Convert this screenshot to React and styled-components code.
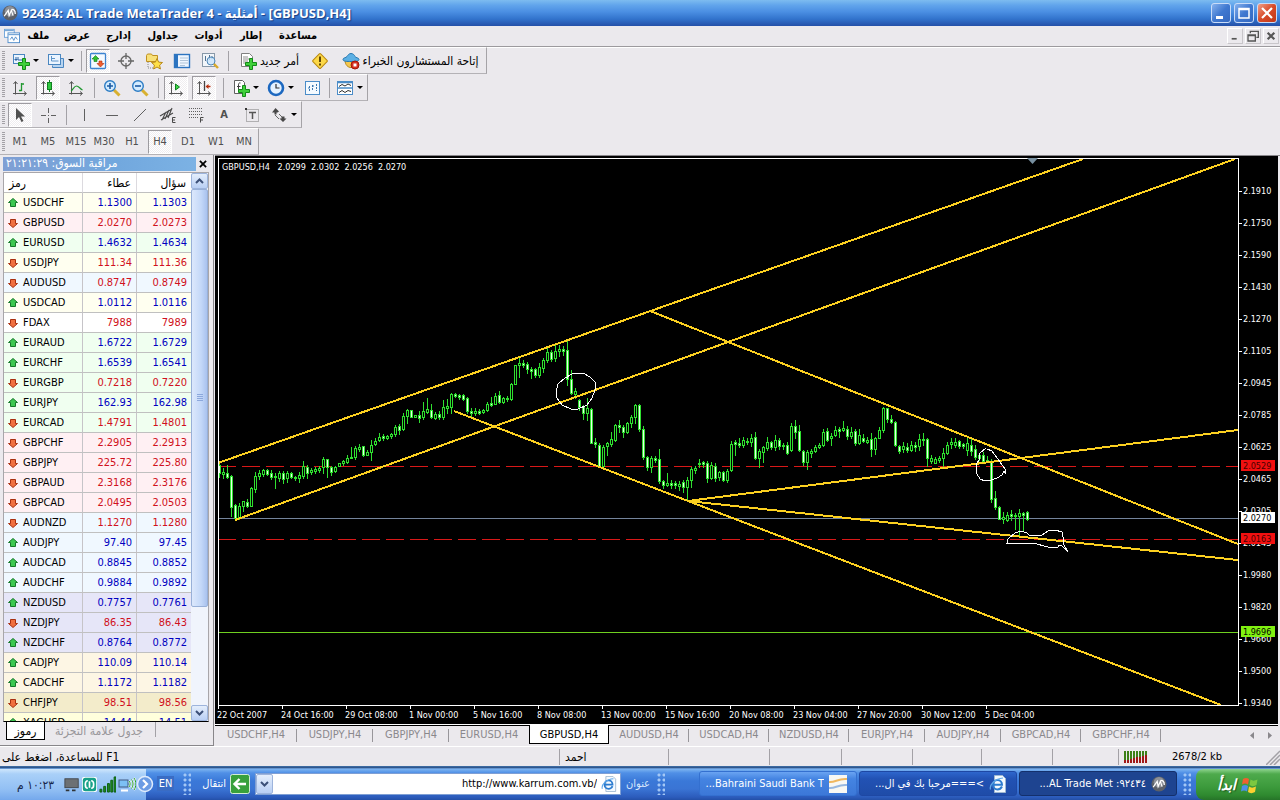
import React from "react";
import styled, { createGlobalStyle, css } from "styled-components";

const GlobalStyle = createGlobalStyle`
  * { box-sizing: border-box; }
  body { margin: 0; background: #ebe9ed; }
  body, button, input, table {
    font-family: "DejaVu Sans Condensed", "DejaVu Sans", sans-serif;
    font-size: 11px;
    color: #000;
  }
  button { border: 0; padding: 0; margin: 0; background: none; }
  svg { display: block; flex: none; }
`;

const Desktop = styled.div`
  height: 100vh;
  min-height: 480px;
  display: flex;
  flex-direction: column;
  overflow: hidden;
`;

/* ---------- title and menu ---------- */

const TitleBar = styled.header`
  height: 26px;
  flex: none;
  display: flex;
  align-items: center;
  gap: 4px;
  padding: 0 3px 0 2px;
  background: linear-gradient(#7dbcf0 0, #62a5ec 5px, #4a8ee2 12px, #3273cc 19px, #2450a8 26px);
`;

const Title = styled.h1`
  flex: 1;
  margin: 0;
  font: bold 13px/20px "Open Sans", "DejaVu Sans Condensed", sans-serif;
  color: #fff;
  text-shadow: 1px 1px 1px #163a80;
  white-space: pre;
`;

const CaptionButtons = styled.div`
  display: flex;
  gap: 3px;
`;

const CaptionButton = styled.button`
  width: 20px;
  height: 20px;
  border: 1px solid #c9dcf8;
  border-radius: 3px;
  background: ${(p) => (p.$close ? "linear-gradient(135deg,#f0a088,#d84a28 50%,#c03818)" : "linear-gradient(135deg,#86b2ee,#3f78d0 50%,#3468c0)")};
`;

const MenuBar = styled.nav`
  height: 21px;
  flex: none;
  display: flex;
  align-items: center;
  padding: 0 1px 1px 4px;
  border-bottom: 1px solid #9c9a9e;
`;

const MenuItem = styled.button`
  width: ${(p) => p.$w}px;
  height: 18px;
  text-align: center;
  font-weight: bold;
  font-size: 11px;
`;

const Spacer = styled.div`
  flex: 1;
`;

const ChildButton = styled.button`
  width: 16px;
  height: 16px;
  margin-left: 2px;
  display: flex;
  align-items: center;
  justify-content: center;
  border: 1px solid;
  border-color: #fff #c8c6ca #c8c6ca #fff;
`;

/* ---------- toolbars ---------- */

const Toolbars = styled.div`
  flex: none;
  display: flex;
  flex-direction: column;
  align-items: flex-start;
  box-shadow: inset 0 1px 0 #fff;
`;

const Toolbar = styled.div`
  height: 27px;
  display: flex;
  align-items: center;
  border-right: 1px solid #a5a3a7;
  border-bottom: 1px solid #b4b2b6;
  border-top: 1px solid #fff;
`;

const Grip = styled.span`
  width: ${(p) => p.$w || 6}px;
  height: 20px;
  background: repeating-linear-gradient(#a3a1a6 0 1px, transparent 1px 2px) no-repeat 2px 0 / 3px 20px;
`;

const Sep = styled.span`
  width: ${(p) => p.$w || 8}px;
  height: ${(p) => p.$h || 20}px;
  background: linear-gradient(#a3a1a6, #a3a1a6) no-repeat center / 1px 100%;
`;

const ToolButton = styled.button`
  height: 24px;
  width: ${(p) => p.$w || 28}px;
  display: flex;
  align-items: center;
  justify-content: center;
  gap: 3px;
  font-size: ${(p) => (p.$text ? 11 : 12)}px;
  color: ${(p) => (p.$text ? "#505050" : "#000")};
  white-space: nowrap;
  ${(p) =>
    p.$on &&
    css`
      width: 24px;
      margin: 0 2px;
      border: 1px solid;
      border-color: #9d9ba0 #fff #fff #9d9ba0;
      background: repeating-conic-gradient(#fff 0 25%, #efedf0 0 50%) 0 0 / 2px 2px;
    `}
`;

const Caret = styled.span`
  border: 3px solid transparent;
  border-top-color: #000;
  border-bottom: 0;
`;

/* ---------- market watch ---------- */

const Workspace = styled.main`
  flex: 1;
  min-height: 0;
  display: flex;
`;

const Watch = styled.section`
  width: 214px;
  flex: none;
  display: flex;
  flex-direction: column;
  padding: 2px 4px 0 3px;
  border-right: 1px solid #88868a;
  border-bottom: 1px solid #88868a;
`;

const WatchTitle = styled.div`
  height: 14px;
  display: flex;
  justify-content: space-between;
  align-items: center;
  span {
    width: 193px;
    height: 14px;
    line-height: 13px;
    padding-left: 3px;
    font-size: 12px;
    color: #fff;
    text-align: left;
    background: linear-gradient(90deg, #7f9fd4, #72a8de 60%, #7cb2e4);
  }
  button { width: 12px; height: 14px; display: flex; align-items: center; justify-content: center; }
`;

const WatchBody = styled.div`
  flex: 1;
  min-height: 0;
  display: flex;
  margin-top: 1px;
  border: 1px solid #a8a6aa;
  border-bottom: 1px solid #000;
  background: #fff;
`;

const QuoteArea = styled.div`
  flex: 1;
  min-width: 0;
  overflow: hidden;
`;

const Quotes = styled.table`
  width: 100%;
  table-layout: fixed;
  border-collapse: separate;
  border-spacing: 0;
  th, td { height: 20px; padding: 0 4px 0 3px; border-bottom: 1px solid #c0c0c0; border-right: 1px solid #c6c4c8; line-height: 16px; }
  th { font-weight: normal; font-size: 12px; text-align: right; padding-right: 5px; border-right-color: #dcdadf; }
  th:first-child { text-align: left; padding-left: 5px; }
  td { text-align: right; }
  th:last-child, td:last-child { border-right: 0; }
`;

const QuoteRow = styled.tr`
  background: ${(p) => p.$bg};
  && td { color: ${(p) => (p.$up ? "#0000c0" : "#d01020")}; }
  && td:first-child { color: #000; text-align: left; }
`;

const Symbol = styled.span`
  display: flex;
  align-items: center;
  gap: 4px;
`;

const ScrollBar = styled.div`
  width: 17px;
  display: flex;
  flex-direction: column;
  background: #f0f4fc;
  button { height: 16px; flex: none; display: flex; align-items: center; justify-content: center; border: 1px solid #9db4dc; border-radius: 2px; background: linear-gradient(#e4eefc, #b9cff4); }
`;

const Track = styled.div`
  flex: 1;
  div { height: 81%; border: 1px solid #98b0d8; border-radius: 2px; background: linear-gradient(90deg, #dce8fc, #c4d8f8 60%, #a9c2ee); display: flex; align-items: center; justify-content: center; }
`;

const WatchTabs = styled.div`
  height: 23px;
  display: flex;
  padding-left: 3px;
  align-items: flex-start;
`;

const WatchTab = styled.button`
  height: 18px;
  line-height: 16px;
  width: ${(p) => p.$w}px;
  font-size: 12px;
  color: ${(p) => (p.$on ? "#000" : "#98969a")};
  background: ${(p) => (p.$on ? "#fff" : "none")};
  border: ${(p) => (p.$on ? "1px solid #000" : "0")};
  border-top: 0;
`;

/* ---------- chart ---------- */

const ChartPane = styled.section`
  flex: 1;
  min-width: 0;
  display: flex;
  flex-direction: column;
  padding-right: 2px;
  border-top: 1px solid #88868a;
  margin-left: 1px;
`;

const ChartBox = styled.div`
  flex: 1;
  min-height: 0;
  background: #000;
  svg { width: 100%; height: 100%; }
  text { font: 9px "DejaVu Sans Condensed", "DejaVu Sans", sans-serif; fill: #fff; white-space: pre; }
`;

const ChartTabs = styled.div`
  height: 22px;
  flex: none;
  display: flex;
  align-items: flex-start;
  border-top: 1px solid #fff;
  box-shadow: inset 0 1px 0 #000;
`;

const ChartTab = styled.button`
  width: ${(p) => p.$w}px;
  height: ${(p) => (p.$on ? 19 : 18)}px;
  color: ${(p) => (p.$on ? "#000" : "#8a888c")};
  background: ${(p) => (p.$on ? "#fff" : "linear-gradient(#98969a,#98969a) no-repeat right 4px / 1px 13px")};
  ${(p) => p.$on && "border: 1px solid #000; border-top: 0;"}
  ${(p) => p.$last && "background-image: none;"}
`;

const ScrollTabs = styled.div`
  display: flex;
  gap: 14px;
  padding: 7px 6px 0 0;
`;

/* ---------- status bar ---------- */

const StatusBar = styled.footer`
  height: 21px;
  flex: none;
  display: flex;
  align-items: center;
  border-top: 1px solid #fff;
  border-bottom: 1px solid #3c6aa0;
`;

const StatusCell = styled.div`
  height: 16px;
  line-height: 16px;
  font-size: ${(p) => (p.$arabic ? 12 : 11)}px;
  ${(p) => (p.$w ? `width: ${p.$w}px;` : "flex: 1;")}
  padding-left: ${(p) => p.$pad || 2}px;
  ${(p) => p.$line && "border-left: 1px solid #a3a1a6;"}
  display: flex;
  align-items: center;
  white-space: pre;
`;

/* ---------- taskbar ---------- */

const TaskBar = styled.div`
  height: 33px;
  flex: none;
  display: flex;
  align-items: center;
  color: #fff;
  background: linear-gradient(#16386e 0, #7db4f0 2px, #4f8fe6 6px, #3a78d8 14px, #3a74d4 22px, #2c5cbc 30px, #2450a8 33px);
`;

const Tray = styled.div`
  width: 146px;
  align-self: stretch;
  margin-top: 2px;
  display: flex;
  align-items: center;
  gap: 2px;
  padding-left: 16px;
  color: #16264a;
  background: linear-gradient(#cfe6fc 0, #a9d0f8 5px, #93c0f4 20px, #74a8ec 31px);
  time { width: 38px; margin-right: 8px; font-size: 12px; white-space: nowrap; }
`;

const RoundButton = styled.button`
  width: 18px;
  height: 18px;
  margin-left: -10px;
`;

const Language = styled.button`
  width: 17px;
  height: 15px;
  margin: 0 5px 0 3px;
  color: #fff;
  background: #3a6cc4;
  font-size: 11px;
`;

const TaskGrip = styled.span`
  width: 8px;
  height: 22px;
  margin: 0 ${(p) => p.$r || 5}px 0 ${(p) => p.$l || 4}px;
  background: radial-gradient(circle at 2px 2px, #a4c8f6 1px, transparent 2px) 0 0 / 5px 5px;
`;

const Go = styled.button`
  display: flex;
  align-items: center;
  gap: 4px;
  width: 54px;
  color: #fff;
  font-size: 11px;
  justify-content: flex-end;
`;

const Address = styled.div`
  flex: 1;
  height: 22px;
  margin-left: 5px;
  display: flex;
  align-items: center;
  background: #fff;
  border: 1px solid #7f9fd4;
  padding-right: 3px;
  button { width: 17px; height: 20px; border: 1px solid #9db4dc; border-radius: 2px; background: linear-gradient(#e4eefc, #b9cff4); display: flex; align-items: center; justify-content: center; }
  input { flex: 1; min-width: 0; border: 0; outline: 0; background: none; text-align: right; padding: 0 4px 0 0; }
`;

const AddressLabel = styled.label`
  width: 30px;
  margin-left: 5px;
  font-size: 11px;
  color: #d8e8fc;
`;

const Task = styled.button`
  width: 158px;
  height: 25px;
  margin-right: 2px;
  display: flex;
  align-items: center;
  gap: 5px;
  padding: 0 9px 0 4px;
  color: #fff;
  border-radius: 3px;
  white-space: nowrap;
  border: 1px solid ${(p) => (p.$on ? "#14306c" : p.$deep ? "#1e48a4" : "#3470d0")};
  background: ${(p) => (p.$on ? "#1e4490" : p.$deep ? "linear-gradient(#2e66cc,#2252b4 30%,#1f4ca8)" : "linear-gradient(#6aa4f2,#4484e2 30%,#3c78d8)")};
  span { overflow: hidden; }
`;

const Start = styled.button`
  width: 84px;
  height: 31px;
  margin-top: 2px;
  display: flex;
  align-items: center;
  justify-content: center;
  gap: 5px;
  color: #fff;
  font: italic bold 15px "DejaVu Sans Condensed", sans-serif;
  text-shadow: 1px 1px 1px #1c5c1c;
  border-radius: 8px 0 0 8px;
  background: linear-gradient(#8fd48f 0, #4eaa4c 5px, #3c9a3c 18px, #2f8a30 26px, #267428 31px);
`;

/* ---------- icons ---------- */

const Icon = ({ size = 18, children, ...rest }) => (
  <svg width={size} height={size} viewBox="0 0 18 18" fill="none" aria-hidden="true" {...rest}>{children}</svg>
);
const Plus = ({ x = 6, y = 6 }) => (
  <path transform={`translate(${x} ${y})`} d="M4.500.5h3v4h4v3h-4v4h-3v-4h-4v-3h4z" fill="#3fd03a" stroke="#128a18" />
);
const Axes = ({ children }) => (
  <Icon>
    <path d="M4.500 3v12.500M2 14.500h13M2.500 5l2-2.500 2 2.500M13 12.500l2.500 2-2.500 2" stroke="#555" />
    {children}
  </Icon>
);
const icons = {
  newChart: <Icon><rect x="1.500" y="2.500" width="11" height="9" fill="#eaf4ff" stroke="#4a86c0" /><path d="M4 5v4M2.500 7.500h3M6 5v3h4" stroke="#2e66a4" /><Plus /></Icon>,
  profiles: <Icon><path d="M5.500 13.500v2h11v-9h-3" fill="#b8d4f0" stroke="#4a86c0" /><rect x="1.500" y="2.500" width="12" height="10" fill="#eaf4ff" stroke="#4a86c0" /><path d="M4.500 4v5h7M8 6.500H4.500" stroke="#5e94c8" /></Icon>,
  marketWatch: <Icon><rect x="1.500" y="1.500" width="15" height="15" rx="1" fill="#f4faff" stroke="#3c84d0" strokeWidth="1.300" /><path d="M6.500 3.500l3.500 3.500H8v2.500H5V7H3z" fill="#30c030" stroke="#107818" strokeWidth=".6" /><path d="M11.500 15L15 11.500h-2V9h-3v2.500H8z" fill="#f06030" stroke="#b02808" strokeWidth=".6" /></Icon>,
  crosshair: <Icon><circle cx="9" cy="9" r="5" stroke="#666" strokeWidth="1.300" /><path d="M9 1v6M9 11v6M1 9h6M11 9h6" stroke="#666" strokeWidth="1.300" /></Icon>,
  favorites: <Icon><path d="M1.500 3.500l1-1.500h4l1 1.500h5v6h-11z" fill="#f8e078" stroke="#c09020" /><path d="M3 10v6h5" stroke="#888" strokeDasharray="1 1" /><path d="M12 6.500l1.600 3.600 3.900.4-2.900 2.600.8 3.900-3.400-2-3.400 2 .8-3.900-2.900-2.600 3.900-.4z" fill="#ffe048" stroke="#b88818" /></Icon>,
  dataWindow: <Icon><rect x="1.500" y="2.500" width="15" height="13" fill="#eef6ff" stroke="#2c74c0" strokeWidth="1.400" /><path d="M2 3h3v12H2z" fill="#2c74c0" /><path d="M7 6h8M7 8.500h8M7 11h8M7 13.500h5" stroke="#b0c4d8" /></Icon>,
  tester: <Icon><rect x="1.500" y="1.500" width="12" height="13" fill="#f2f6fa" stroke="#8898a8" /><path d="M4.500 4v5M8.500 3v5M11 4v3" stroke="#507090" /><circle cx="10" cy="9" r="4" fill="#c8e4fa" fillOpacity=".8" stroke="#5088b8" /><path d="M13 12l4 4" stroke="#d8a828" strokeWidth="2.400" /></Icon>,
  newOrder: <Icon><path d="M2.500 1.500h8l3 3v10h-11z" fill="#fff" stroke="#808080" /><path d="M4 5h5M4 7h7M4 9h5M4 11h3" stroke="#909090" /><Plus /></Icon>,
  warning: <Icon><rect x="3.500" y="3.500" width="11" height="11" rx="1" transform="rotate(45 9 9)" fill="#fcd848" stroke="#b88810" /><path d="M9 4.500v5.500M9 11.500v2" stroke="#503800" strokeWidth="1.800" /></Icon>,
  expert: <Icon><path d="M3 8c0 5 3 7.500 6 7.500s5-2.500 5-7.500z" fill="#f4c850" stroke="#b88818" /><path d="M1 7.500C1 5.500 4 6 5 4.500s2-3 4-3 3.500 1.500 4 3 4 1 4 3-4 2-8 2-8 0-8-2z" fill="#5cb0e4" stroke="#2878b0" /><circle cx="13" cy="13" r="4" fill="#d83020" stroke="#a01808" /><rect x="11.500" y="11.500" width="3" height="3" fill="#fff" /></Icon>,
  bars: <Axes><path d="M10.500 4v8M8 11.500h2.500M10.500 5H13" stroke="#209830" strokeWidth="1.300" /></Axes>,
  candles: <Axes><path d="M10.500 1v12" stroke="#108020" /><rect x="8.500" y="3.500" width="4" height="7" fill="#30c840" stroke="#108020" /></Axes>,
  line: <Axes><path d="M4 12c2-1 3-5 5.500-5s3 2.500 6 4" stroke="#209830" strokeWidth="1.200" /></Axes>,
  zoomIn: <Icon><path d="M11 11l5.500 5.500" stroke="#d8b030" strokeWidth="3" /><circle cx="7" cy="7" r="5.300" fill="#d4ecff" stroke="#2c7cc4" strokeWidth="1.400" /><path d="M4 7h6M7 4v6" stroke="#1c5ca4" strokeWidth="1.600" /></Icon>,
  zoomOut: <Icon><path d="M11 11l5.500 5.500" stroke="#d8b030" strokeWidth="3" /><circle cx="7" cy="7" r="5.300" fill="#d4ecff" stroke="#2c7cc4" strokeWidth="1.400" /><path d="M4 7h6" stroke="#1c5ca4" strokeWidth="1.600" /></Icon>,
  autoScroll: <Axes><path d="M8.500 5l4 3-4 3z" fill="#40d848" stroke="#108020" /></Axes>,
  shift: <Axes><path d="M9.500 2v10" stroke="#444" strokeWidth="1.300" /><path d="M15.500 7.500h-4" stroke="#b83010" strokeWidth="1.500" /><path d="M13.500 5v5L10.500 7.500z" fill="#b83010" /></Axes>,
  indicators: <Icon><path d="M2.500 1.500h8l2 2v11h-10z" fill="#fff" stroke="#606060" /><path d="M8.500 4c-2-.5-2 1-2 2v6M5 7.500h3.500" stroke="#404040" /><Plus /></Icon>,
  clock: <Icon><circle cx="9" cy="9" r="7" fill="#e4f2ff" stroke="#1c68c0" strokeWidth="2.600" /><path d="M9 5v4h3.500" stroke="#303030" strokeWidth="1.200" /></Icon>,
  template: <Icon><rect x="2.500" y="2.500" width="14" height="13" fill="#f4faff" stroke="#4a8cc8" /><path d="M6.500 7v5M5 9h1.500M9.500 6v5M9.500 7H11M13.500 5v7" stroke="#3c78b0" strokeDasharray="2 1" /></Icon>,
  oscillator: <Icon><rect x="1.500" y="2.500" width="15" height="13" fill="#fff" stroke="#4a8cc8" /><path d="M2 3.500h14M2 9h14" stroke="#4a8cc8" strokeWidth="1.600" /><path d="M3 7.500l3-2 3 1.500 3-2 3 1.500M3 13.500l3-2 3 2 3-2 3 1" stroke="#303030" /></Icon>,
  cursor: <Icon><path d="M5 2v12l3-3 2.500 5 2-1-2.500-4.500H14z" fill="#505050" /></Icon>,
  cross: <Icon><path d="M9.500 2v5M9.500 12v5M2 9.500h5M12 9.500h5M9 9.500h1" stroke="#606060" /></Icon>,
  vline: <Icon><path d="M9.500 3v12" stroke="#606060" /></Icon>,
  hline: <Icon><path d="M3 9.500h12" stroke="#606060" /></Icon>,
  trend: <Icon><path d="M3 15L15 3" stroke="#606060" /></Icon>,
  channel: <Icon><path d="M1 10L13 3M2 14l12-7M3 14L7 6M6 13l4-9M9 12l4-10" stroke="#484848" strokeWidth="1.100" /><path d="M16.500 11.500h-3v5h3M13.500 14H16" stroke="#484848" /></Icon>,
  fibo: <Icon><path d="M2 2.500h14M2 5.500h14M2 8.500h14M2 11.500h9" stroke="#606060" strokeDasharray="1 1" /><path d="M16.500 11.500h-3v5M13.500 14H16" stroke="#484848" /></Icon>,
  label: <Icon><rect x="3.500" y="3.500" width="12" height="12" stroke="#777" strokeDasharray="1 1" /><path d="M6 6.500h7M9.500 6.500V13" stroke="#555" strokeWidth="1.500" /><path d="M2 2h2v2H2z" fill="#333" /></Icon>,
  arrows: <Icon><path d="M5.500 2l3.500 3.500-1.500 1H6.500v2h-2v-2H2zM13 16l3.500-3.500H14.500v-2h-3v2H9.500z" fill="#484848" /><path d="M5 9l4 4M9 8l3 3" stroke="#666" /></Icon>,
};

const Arrow = ({ up }) => (
  <svg width="12" height="12" viewBox="0 0 12 12" aria-hidden="true">
    <path
      d={up ? "M6 1.500l4.500 4H8.500v4h-5v-4h-2z" : "M6 10.500l4.500-4H8.500v-4h-5v4h-2z"}
      fill={up ? "#3cc850" : "#f07040"}
      stroke={up ? "#147828" : "#a83010"}
    />
  </svg>
);

const Chevron = ({ up }) => (
  <svg width="9" height="6" viewBox="0 0 9 6" aria-hidden="true">
    <path d={up ? "M1 5l3.500-3.500L8 5" : "M1 1l3.500 3.500L8 1"} fill="none" stroke="#3c5078" strokeWidth="2" />
  </svg>
);

const AppLogo = () => (
  <Icon size={16}>
    <circle cx="9" cy="9" r="8.500" fill="#5c6068" />
    <circle cx="9" cy="7" r="6" fill="#8c9098" />
    <path d="M2.500 12.500L7 6l1 6 2.500-6 2 6M11 5c3 0 4 3 4 5" stroke="#fff" strokeWidth="1.300" />
  </Icon>
);

const Explorer = ({ size = 18 }) => (
  <Icon size={size}>
    <path d="M5.500.5h8l3 3v14h-11z" fill="#f4faff" stroke="#a0b8d0" />
    <path d="M13 11.500c-1 2-2.500 3-4.500 3-2.500 0-4.500-2-4.500-4.700S6 5 8.500 5 13 7 13 9.800H5" stroke="#2c7cd0" strokeWidth="2" />
    <path d="M1.500 14.500C0 10 6 3.500 14 3" stroke="#60a8e8" strokeWidth="1.200" />
  </Icon>
);

/* ---------- data ---------- */

const tints = {
  USD: "#fffff0", GBP: "#fff0f3", EUR: "#f0fff0", AUD: "#f0f8ff",
  FDA: "#ffffff", NZD: "#e6e6f8", CAD: "#fdf6e4", CHF: "#f3eccb", XAG: "#ffffdc",
};

const quotes = `USDCHF 1.1300 1.1303 u|GBPUSD 2.0270 2.0273 d|EURUSD 1.4632 1.4634 u|USDJPY 111.34 111.36 d|AUDUSD 0.8747 0.8749 d|USDCAD 1.0112 1.0116 u|FDAX 7988 7989 d|EURAUD 1.6722 1.6729 u|EURCHF 1.6539 1.6541 u|EURGBP 0.7218 0.7220 d|EURJPY 162.93 162.98 u|EURCAD 1.4791 1.4801 d|GBPCHF 2.2905 2.2913 d|GBPJPY 225.72 225.80 d|GBPAUD 2.3168 2.3176 d|GBPCAD 2.0495 2.0503 d|AUDNZD 1.1270 1.1280 d|AUDJPY 97.40 97.45 u|AUDCAD 0.8845 0.8852 u|AUDCHF 0.9884 0.9892 u|NZDUSD 0.7757 0.7761 u|NZDJPY 86.35 86.43 d|NZDCHF 0.8764 0.8772 u|CADJPY 110.09 110.14 u|CADCHF 1.1172 1.1182 u|CHFJPY 98.51 98.56 d|XAGUSD 14.44 14.51 u`
  .split("|")
  .map((row) => row.split(" "));

/* high, body top, body bottom, low, direction */
const candles = `463,465,473,477,d 468,472,474,478,u 465,473,477,478,d 475,476,507,516,d 504,505,518,519,d 503,506,517,519,u 501,501,506,511,u 499,502,506,507,d 487,488,506,506,u 472,476,489,492,u
470,473,476,479,u 469,470,474,476,u 469,470,474,475,d 470,473,477,479,d 473,476,477,488,d 471,473,478,481,u 471,473,479,483,d 471,473,478,482,u 472,473,477,478,d 476,477,478,480,d
472,475,478,482,u 461,466,476,478,u 465,467,473,478,d 468,470,472,474,u 467,469,471,473,u 466,468,470,472,u 457,459,467,473,u 459,459,467,477,d 466,467,472,475,d 466,467,471,472,u
463,463,466,466,u 460,461,463,465,u 455,458,462,463,u 447,457,458,458,u 446,448,457,459,u 444,447,449,451,u 446,446,455,456,d 450,452,455,455,u 440,445,452,460,u 438,441,444,445,u
433,437,440,441,u 434,436,438,440,d 435,436,438,439,u 433,434,436,438,u 425,427,434,436,u 424,426,430,434,d 413,416,429,430,u 409,410,416,423,u 410,410,417,417,d 415,415,417,417,u
411,415,418,422,d 402,411,417,419,u 398,409,412,413,u 404,410,417,418,d 412,414,418,419,u 411,414,417,419,d 400,407,417,419,u 399,406,408,413,u 393,394,407,413,u 393,394,396,397,d
394,395,397,399,d 394,395,399,400,d 397,398,411,413,d 408,411,413,416,d 408,411,413,415,u 409,411,413,414,d 409,410,412,413,u 402,404,410,411,u 397,403,405,406,d 393,396,404,404,u
391,395,402,403,d 397,398,402,403,u 396,398,399,401,d 383,384,399,400,u 365,365,384,384,u 358,363,365,377,u 360,363,365,367,d 362,364,369,373,d 367,369,371,378,d 368,369,375,377,d
363,367,375,377,u 358,360,368,372,u 348,352,360,362,u 350,352,359,361,d 344,351,358,361,u 345,349,351,356,u 346,349,351,355,d 341,350,379,385,d 370,379,393,394,d 388,391,394,398,u
399,400,407,410,d 405,406,413,419,d 398,408,413,420,u 408,409,443,443,d 438,442,444,447,d 443,445,466,467,d 445,447,466,467,u 442,443,446,455,u 432,439,444,446,u 424,425,440,441,u
420,425,427,432,d 425,427,432,437,d 422,423,432,433,u 415,417,423,427,u 404,405,417,423,u 404,405,429,431,d 426,429,457,459,d 456,457,467,470,d 456,458,467,472,u 456,458,460,462,d
449,459,481,483,d 480,481,485,488,d 473,483,485,486,u 480,483,485,488,d 481,483,485,488,d 481,484,486,490,u 480,482,487,492,d 477,480,487,501,u 467,469,480,487,u 466,468,470,473,u
459,463,464,467,u 461,462,464,467,d 461,463,478,482,d 462,465,478,479,u 463,466,478,481,d 471,472,477,480,u 471,472,480,481,d 469,471,480,482,u 441,444,470,471,u 440,442,444,455,d
438,443,445,447,d 437,440,445,447,u 438,441,442,444,d 434,438,442,446,u 432,437,458,459,d 449,451,458,467,u 446,447,452,462,u 437,442,448,450,u 441,442,447,449,d 435,440,447,450,u
438,440,446,449,d 443,445,446,449,d 442,445,453,454,d 423,426,450,451,u 420,426,432,438,d 425,431,450,451,d 450,451,462,465,d 450,452,462,469,u 449,451,453,457,u 445,447,451,452,u
443,445,447,448,u 429,432,445,446,u 428,431,440,441,d 433,436,438,445,u 426,430,435,436,u 427,429,431,437,d 421,428,430,431,u 426,429,436,439,d 427,432,436,438,u 429,431,443,445,d
429,435,443,444,u 434,438,441,442,d 437,440,442,443,u 433,439,449,456,d 437,438,449,454,u 427,430,438,438,u 407,408,430,432,u 408,408,419,422,d 415,419,422,423,d 421,422,445,446,d
445,446,451,453,d 442,446,449,452,u 443,447,450,452,d 441,445,450,451,u 442,445,447,451,d 434,439,446,450,u 433,439,440,445,d 438,439,458,466,d 455,458,461,463,u 457,459,463,463,u
456,458,460,462,u 448,453,458,466,u 442,445,453,454,u 438,442,444,448,u 438,442,445,447,u 440,441,446,448,d 443,444,446,448,d 438,443,450,455,u 439,445,451,455,d 445,449,457,459,d
453,455,458,460,u 452,455,461,463,d 456,460,461,462,d 459,461,499,502,d 491,498,507,509,d 506,507,519,519,d 512,517,519,523,u 512,515,520,521,u 510,514,516,520,d 513,515,516,529,d
509,513,516,536,u 512,513,515,530,d 511,512,519,520,d`
  .split(/\s+/)
  .map((c) => c.split(","))
  .map(([h, t, b, l, d]) => ({ h: +h, t: +t, b: +b, l: +l, up: d === "u" }));

const prices = "2.1910 2.1750 2.1590 2.1430 2.1270 2.1105 2.0945 2.0785 2.0625 2.0465 2.0305 2.0143 1.9980 1.9820 1.9660 1.9500 1.9340".split(" ");
const dates = ["22 Oct 2007", "24 Oct 16:00", "29 Oct 08:00", "1 Nov 00:00", "5 Nov 16:00", "8 Nov 08:00", "13 Nov 00:00", "15 Nov 16:00", "20 Nov 08:00", "23 Nov 04:00", "27 Nov 20:00", "30 Nov 12:00", "5 Dec 04:00"];
const tags = [
  { y: 466, text: "2.0529", bg: "#f01010", fg: "#400" },
  { y: 518, text: "2.0270", bg: "#fff", fg: "#000" },
  { y: 539, text: "2.0163", bg: "#f01010", fg: "#400" },
  { y: 632, text: "1.9696", bg: "#80f010", fg: "#000" },
];

const chartTabs = [["USDCHF", 82], ["USDJPY", 76], ["GBPJPY", 76], ["EURUSD", 80], ["GBPUSD", 80], ["AUDUSD", 80], ["USDCAD", 80], ["NZDUSD", 80], ["EURJPY", 76], ["AUDJPY", 76], ["GBPCAD", 80], ["GBPCHF", 80]];
const menus = [["ملف", 37], ["عرض", 40], ["إدارج", 43], ["جداول", 46], ["أدوات", 45], ["إطار", 40], ["مساعدة", 54]];

function PriceChart() {
  return (
    <svg viewBox="215 156 1063 568" role="img" aria-label="GBPUSD,H4">
      <g shapeRendering="crispEdges" fill="none">
        <path d="M218 518.500H1238" stroke="#74849c" />
        <path d="M218 632.500H1238" stroke="#6fd020" />
        <path d="M218 466.500H1238M218 539.500H1238" stroke="#d81818" strokeDasharray="18 6" />
        {candles.map((c, i) => {
          const x = 219 + i * 4;
          return (
            <g key={i} stroke="#2fe02f">
              <path d={`M${x + 0.5} ${c.h}V${c.l + 1}`} />
              <rect x={x - 0.5} y={c.t + 0.5} width="2" height={Math.max(c.b - c.t, 1)} fill={c.up ? "#000" : "#e8ffe8"} />
            </g>
          );
        })}
        <g stroke="#fcd020" strokeWidth="2">
          <path d="M218 463L1083 159M235 520L1235 159M454 411L688 501L1221 705M650 311L1238 544M688 501L1238 430M688 501L1238 560" />
        </g>
        <g stroke="#fff">
          <path d="M577 373l6 0 7 4 5 5v8l-3 8-5 7-9 4h-7l-9-4-5-7-1-6 2-8 7-6 7-4z" />
          <path d="M986 448l-6 5-1 7-3 5 1 9 3 5 5 2 6-1 6-2 5-3 2-4 2 3-1-5-5-7-5-7-3-4-5-2" />
          <path d="M1007 543l1-4 7-6 6-2 6 2 3 3 12-1 6-4 7-1 7 2 1 5v6l5 9-6-6-3-1-1 2h-10l-15-4h-11z" />
          <path d="M218.500 705V158.500H1238.500V705.500H218" />
          {prices.map((p, i) => <path key={p} d={`M1239 ${191.5 + i * 32}h3`} />)}
          {dates.map((d, i) => <path key={d} d={`M${218.5 + i * 64} 706v3`} />)}
        </g>
      </g>
      <path d="M1027 158h11l-5.500 6z" fill="#7890a0" />
      <text x="222" y="170">{"GBPUSD,H4   2.0299  2.0302  2.0256  2.0270"}</text>
      {prices.map((p, i) => <text key={p} x="1243" y={194 + i * 32}>{p}</text>)}
      {dates.map((d, i) => <text key={d} x={217 + i * 64} y="718">{d}</text>)}
      {tags.map((t) => (
        <g key={t.text}>
          <rect x="1241" y={t.y - 6} width="34" height="11" fill={t.bg} />
          <text x="1243" y={t.y + 3} style={{ fill: t.fg }}>{t.text}</text>
        </g>
      ))}
    </svg>
  );
}

const Tool = ({ name, drop, on }) => (
  <ToolButton aria-label={name} $on={on} $w={drop ? 35 : 28}>
    {icons[name]}
    {drop && <Caret />}
  </ToolButton>
);

export default function App() {
  return (
    <Desktop>
      <GlobalStyle />
      <TitleBar>
        <AppLogo />
        <Title>92434: AL Trade MetaTrader 4 - أمثلية - [GBPUSD,H4]</Title>
        <CaptionButtons>
          <CaptionButton aria-label="Minimize"><Icon><path d="M4 13.500h7" stroke="#fff" strokeWidth="3" /></Icon></CaptionButton>
          <CaptionButton aria-label="Maximize"><Icon><path d="M4 4.500h10V14H4zM4 5.500h10" stroke="#fff" strokeWidth="1.500" /></Icon></CaptionButton>
          <CaptionButton aria-label="Close" $close><Icon><path d="M4 4l10 10M14 4L4 14" stroke="#fff" strokeWidth="2.200" /></Icon></CaptionButton>
        </CaptionButtons>
      </TitleBar>
      <MenuBar>
        <Icon size={16}><rect x=".5" y="1.500" width="11" height="9" fill="#fff" stroke="#6aa0d8" /><rect x="4.500" y="5.500" width="13" height="11" fill="#fff" stroke="#4a88c8" /><path d="M1 3h10M5 7.500h12M7 13l2-3 2 4 2-4 2 3" stroke="#4a88c8" /></Icon>
        {menus.map(([label, w]) => <MenuItem key={label} $w={w}>{label}</MenuItem>)}
        <Spacer />
        <ChildButton aria-label="Minimize chart"><Icon size={10}><path d="M3 14h9" stroke="#555" strokeWidth="3" /></Icon></ChildButton>
        <ChildButton aria-label="Restore chart"><Icon size={12}><path d="M5 5V2h12v9h-3M1.500 7.500h11v9h-11zM1.500 8.500h11" stroke="#555" strokeWidth="2" /></Icon></ChildButton>
        <ChildButton aria-label="Close chart"><Icon size={10}><path d="M3 3l12 12M15 3L3 15" stroke="#555" strokeWidth="4" /></Icon></ChildButton>
      </MenuBar>

      <Toolbars>
        <Toolbar>
          <Grip $w={8} />
          <Tool name="newChart" drop /><Tool name="profiles" drop />
          <Sep $w={6} />
          <Tool name="marketWatch" on /><Tool name="crosshair" /><Tool name="favorites" /><Tool name="dataWindow" /><Tool name="tester" />
          <Sep />
          <ToolButton $w={74}>{icons.newOrder}أمر جديد</ToolButton>
          <Tool name="warning" />
          <ToolButton $w={152}>{icons.expert}إتاحة المستشارون الخبراء</ToolButton>
        </Toolbar>
        <Toolbar>
          <Grip />
          <Tool name="bars" /><Tool name="candles" on /><Tool name="line" />
          <Sep />
          <Tool name="zoomIn" /><Tool name="zoomOut" />
          <Sep />
          <Tool name="autoScroll" on /><Tool name="shift" on />
          <Sep $w={10} />
          <Tool name="indicators" drop /><Tool name="clock" drop /><Tool name="template" />
          <Sep $w={6} />
          <Tool name="oscillator" drop />
        </Toolbar>
        <Toolbar>
          <Grip />
          <Tool name="cursor" on /><Tool name="cross" />
          <Sep />
          <Tool name="vline" /><Tool name="hline" /><Tool name="trend" /><Tool name="channel" /><Tool name="fibo" />
          <ToolButton $text><b>A</b></ToolButton>
          <Tool name="label" /><Tool name="arrows" drop />
        </Toolbar>
        <Toolbar>
          <Grip />
          {["M1", "M5", "M15", "M30", "H1", "H4", "D1", "W1", "MN"].map((p) => (
            <ToolButton key={p} $text $on={p === "H4"}>{p}</ToolButton>
          ))}
        </Toolbar>
      </Toolbars>

      <Workspace>
        <Watch>
          <WatchTitle>
            <span dir="rtl">مراقبة السوق: ٢١:٢١:٢٩</span>
            <button aria-label="Close market watch"><Icon size={8}><path d="M2 2l14 14M16 2L2 16" stroke="#000" strokeWidth="4" /></Icon></button>
          </WatchTitle>
          <WatchBody>
            <QuoteArea>
              <Quotes>
                <colgroup><col width="79" /><col width="54" /><col /></colgroup>
                <thead><tr><th>رمز</th><th>عطاء</th><th>سؤال</th></tr></thead>
                <tbody>
                  {quotes.map(([s, bid, ask, d]) => (
                    <QuoteRow key={s} $up={d === "u"} $bg={tints[s.slice(0, 3)]}>
                      <td><Symbol><Arrow up={d === "u"} />{s}</Symbol></td>
                      <td>{bid}</td>
                      <td>{ask}</td>
                    </QuoteRow>
                  ))}
                </tbody>
              </Quotes>
            </QuoteArea>
            <ScrollBar>
              <button aria-label="Scroll up"><Chevron up /></button>
              <Track><div><svg width="6" height="8"><path d="M0 .5h6M0 2.500h6M0 4.500h6M0 6.500h6" stroke="#8ca8dc" /></svg></div></Track>
              <button aria-label="Scroll down"><Chevron /></button>
            </ScrollBar>
          </WatchBody>
          <WatchTabs>
            <WatchTab $on $w={39}>رموز</WatchTab>
            <WatchTab $w={108}>جدول علامة التجزئة</WatchTab>
            <Sep $w={4} $h={15} />
          </WatchTabs>
        </Watch>

        <ChartPane>
          <ChartBox><PriceChart /></ChartBox>
          <ChartTabs>
            {chartTabs.map(([s, w]) => (
              <ChartTab key={s} $w={w} $on={s === "GBPUSD"} $last={s === "EURUSD"}>{s},H4</ChartTab>
            ))}
            <Spacer />
            <ScrollTabs>
              <svg width="4" height="7"><path d="M4 0v7L0 3.500z" fill="#8a888c" /></svg>
              <svg width="4" height="7"><path d="M0 0v7l4-3.500z" fill="#8a888c" /></svg>
            </ScrollTabs>
          </ChartTabs>
        </ChartPane>
      </Workspace>

      <StatusBar>
        <StatusCell $arabic>للمساعدة، اضغط على F1</StatusCell>
        <StatusCell $arabic $line $w={109} $pad={5}>احمد</StatusCell>
        <StatusCell $line $w={101} /><StatusCell $line $w={72} /><StatusCell $line $w={71} /><StatusCell $line $w={69} /><StatusCell $line $w={71} /><StatusCell $line $w={66} />
        <StatusCell $line $w={53} $pad={5}>
          <svg width="24" height="12"><path d="M1 0v12M4 0v12M7 0v12M10 0v12M13 0v12M16 0v12M19 0v12M22 0v12" stroke="#3c8018" strokeWidth="2" /><path d="M1 9v3M4 9v3M7 8v4M10 7v5M13 6v6M16 6v6M19 5v7M22 4v8" stroke="#a01818" strokeWidth="2" /></svg>
        </StatusCell>
        <StatusCell $w={95} $pad={1}>2678/2 kb</StatusCell>
        <svg width="14" height="16"><path d="M14 2L0 16M14 6L4 16M14 10L8 16" stroke="#a3a1a6" strokeWidth="1.500" /></svg>
      </StatusBar>

      <TaskBar>
        <Tray>
          <time dir="rtl">١٠:٢٣ م</time>
          <Icon size={16}><rect x="1" y="2" width="15" height="10" fill="#6c7074" stroke="#404448" /><path d="M2 15h4M9 15h4" stroke="#303438" strokeWidth="2" /></Icon>
          <Icon size={15}><rect x="0" y="0" width="18" height="18" rx="2" fill="#fff" /><rect x="1" y="1" width="16" height="16" rx="3" fill="#18a088" /><path d="M7 4.500c-4 0-4 9 0 9M11 4.500c4 0 4 9 0 9M9 5v8" stroke="#fff" strokeWidth="2" /></Icon>
          <Icon size={17}><path d="M1 14h2v3H1zM5 11h2v6H5zM9 8h2v9H9zM12.500 4.500h2V17h-2zM16 1h2v16h-2z" fill="#209020" stroke="#0c5c10" /></Icon>
          <Icon size={18}><rect x="1" y="4" width="9" height="7" fill="#7cc0f4" stroke="#405880" /><path d="M3 14.500h7M11 5c1.500 1.500 1.500 4 0 6M13.500 3.500c2 3 2 6 0 9M16 2c2.500 4 2.500 8 0 12" stroke="#fff" strokeWidth="2" /><path d="M11 5c1.500 1.500 1.500 4 0 6M13.500 3.500c2 3 2 6 0 9M16 2c2.500 4 2.500 8 0 12" stroke="#209828" /></Icon>
        </Tray>
        <RoundButton aria-label="Hidden icons"><Icon><circle cx="9" cy="9" r="7.500" fill="#6c9ce4" stroke="#e0ecfc" strokeWidth="1.500" /><path d="M7 5l4 4-4 4" stroke="#fff" strokeWidth="2.200" /></Icon></RoundButton>
        <Language>EN</Language>
        <TaskGrip />
        <Go>
          انتقال
          <svg width="20" height="20" viewBox="0 0 20 20"><rect x=".5" y=".5" width="19" height="19" rx="2" fill="#38a03c" stroke="#d4ecd4" /><path d="M16 10H5M9.500 5L4.500 10l5 5" fill="none" stroke="#fff" strokeWidth="2.400" /></svg>
        </Go>
        <Address>
          <button aria-label="Address history"><Chevron /></button>
          <input id="address" type="text" defaultValue="http://www.karrum.com.vb/" />
          <Explorer size={16} />
        </Address>
        <AddressLabel htmlFor="address">عنوان</AddressLabel>
        <TaskGrip $l={1} $r={34} />
        <Task dir="rtl">
          <svg width="18" height="18"><rect width="18" height="18" fill="#f8f8f4" /><path d="M0 7c6 1 9-4 18-3" fill="none" stroke="#f0b860" strokeWidth="2" /><path d="M0 13c6 1 9-4 18-3" fill="none" stroke="#98b8e0" strokeWidth="2" /></svg>
          <span>Bahraini Saudi Bank T...</span>
        </Task>
        <Task dir="rtl" $deep>
          <Explorer />
          <span>&gt;===مرحبا بك في ال...</span>
        </Task>
        <Task dir="rtl" $on>
          <AppLogo />
          <span>٩٢٤٣٤: AL Trade Met...</span>
        </Task>
        <TaskGrip />
        <Start dir="rtl">
          <svg width="18" height="18" viewBox="0 0 18 18"><path d="M2 3c2-1.500 4-1.500 6 0L7 8.500c-2-1.500-4-1.500-6 0z" fill="#f06030" /><path d="M9.500 3.500c2 1.500 4 1.500 7 0l-1 5.500c-2.500 1.500-5 1.500-7 0z" fill="#7cc840" /><path d="M1 10c2-1.500 4-1.500 6 0l-1 5.500c-2-1.500-4-1.500-6 0z" fill="#4c90e8" /><path d="M8 10.500c2 1.500 4 1.500 7 0L14 16c-2.500 1.500-5 1.500-7 0z" fill="#fcd030" /></svg>
          ابدأ
        </Start>
      </TaskBar>
    </Desktop>
  );
}
